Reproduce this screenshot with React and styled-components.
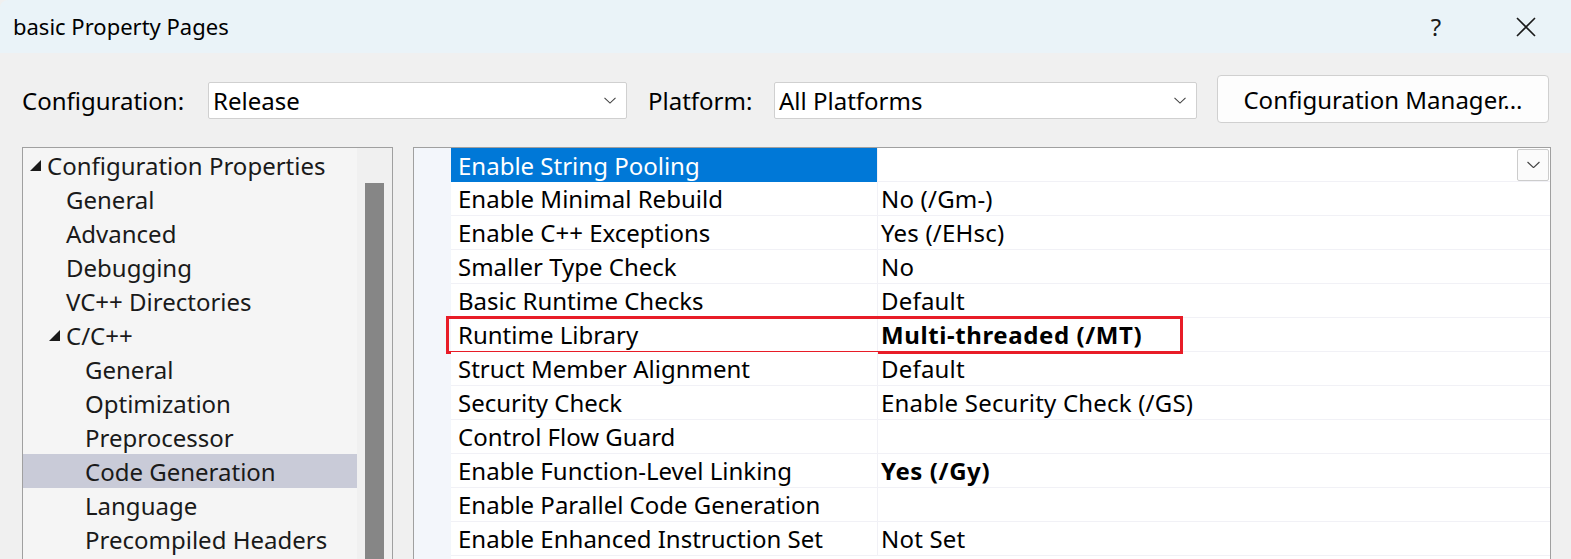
import React from "react";
import styled, { createGlobalStyle } from "styled-components";

const Global = createGlobalStyle`
  html, body { margin: 0; padding: 0; }
  body {
    background: #f0f0f0;
    font-family: "Segoe UI", "Noto Sans", "Open Sans", sans-serif;
    color: #000;
    overflow: hidden;
  }
`;

const Window = styled.div`
  width: 1571px;
  height: 559px;
  background: #f0f0f0;
  overflow: hidden;
  display: flex;
  flex-direction: column;
`;

const TitleBar = styled.div`
  height: 53px;
  flex: none;
  background: #eaf3f8;
  border-top-left-radius: 8px;
  display: flex;
  align-items: center;
  padding-left: 13px;
  box-sizing: border-box;
`;

const Title = styled.div`
  font-size: 22px;
  flex: 1;
  padding-bottom: 2px;
`;

const TitleButton = styled.div`
  width: 46px;
  height: 46px;
  display: flex;
  align-items: center;
  justify-content: center;
  font-size: 24px;
  color: #1a1a1a;
  margin-right: ${(p) => p.$mr || 0}px;
`;

const Body = styled.div`
  flex: 1;
  display: flex;
  flex-direction: column;
  padding: 22px 20px 0 22px;
  min-height: 0;
`;

const Toolbar = styled.div`
  display: flex;
  align-items: center;
  height: 48px;
  flex: none;
`;

const Label = styled.div`
  font-size: 24px;
  width: ${(p) => p.$w}px;
  flex: none;
  padding-top: 2px;
`;

const Select = styled.div`
  width: ${(p) => p.$w}px;
  height: 37px;
  box-sizing: border-box;
  flex: none;
  background: #fff;
  border: 1px solid #d0d0d0;
  border-radius: 2px;
  display: flex;
  align-items: center;
  padding: 0 10px 0 4px;
  font-size: 24px;
  margin-right: ${(p) => p.$mr || 0}px;
  margin-top: 3px;
`;

const SelectText = styled.span`
  flex: 1;
`;

const Button = styled.div`
  width: 332px;
  height: 48px;
  box-sizing: border-box;
  flex: none;
  background: #fdfdfd;
  border: 1px solid #d0d0d0;
  border-radius: 4px;
  display: flex;
  align-items: center;
  justify-content: center;
  font-size: 24px;
`;

const Panels = styled.div`
  display: flex;
  gap: 20px;
  margin-top: 24px;
  flex: 1;
  min-height: 0;
`;

const TreePanel = styled.div`
  width: 371px;
  flex: none;
  box-sizing: border-box;
  border: 1px solid #a0a0a0;
  border-bottom: none;
  background: #f5f5f5;
  display: flex;
`;

const TreeList = styled.div`
  flex: 1;
  display: flex;
  flex-direction: column;
`;

const TreeRow = styled.div`
  height: 34px;
  flex: none;
  display: flex;
  align-items: center;
  padding-left: ${(p) => 7 + p.$level * 19}px;
  background: ${(p) => (p.$selected ? "#c9cbd8" : "transparent")};
  font-size: 24px;
  color: #1a1a1a;
  white-space: nowrap;
`;

const Caret = styled.span`
  width: 17px;
  flex: none;
  display: flex;
  align-items: center;
`;

const ScrollTrack = styled.div`
  width: 35px;
  flex: none;
  background: #f0f0f0;
  padding: 35px 8px 0 8px;
  box-sizing: border-box;
`;

const ScrollThumb = styled.div`
  background: #868686;
  height: 100%;
`;

const PropPanel = styled.div`
  flex: 1;
  box-sizing: border-box;
  border: 1px solid #a0a0a0;
  border-bottom: none;
  background: #fff;
  display: flex;
`;

const Gutter = styled.div`
  width: 37px;
  flex: none;
  background: #f3f6fb;
`;

const Grid = styled.div`
  flex: 1;
  display: flex;
  flex-direction: column;
`;

const PropRow = styled.div`
  position: relative;
  height: 34px;
  flex: none;
  display: grid;
  grid-template-columns: 427px 1fr;
  box-sizing: border-box;
  border-bottom: 1px solid #f1f1f6;
`;

const NameCell = styled.div`
  display: flex;
  align-items: center;
  padding-left: 7px;
  font-size: 24px;
  background: ${(p) => (p.$selected ? "#0078d7" : "#fff")};
  color: ${(p) => (p.$selected ? "#fff" : "#000")};
  border-right: 1px solid #f1f1f6;
  white-space: nowrap;
  margin-bottom: ${(p) => (p.$selected ? "-1px" : "0")};
`;

const ValueCell = styled.div`
  display: flex;
  align-items: center;
  padding-left: 3px;
  padding-right: 1px;
  font-size: 24px;
  font-weight: ${(p) => (p.$bold ? 700 : 400)};
  letter-spacing: ${(p) => (p.$bold ? "0.6px" : "0.2px")};
  white-space: nowrap;
`;

const ValueText = styled.span`
  flex: 1;
`;

const DropButton = styled.div`
  width: 32px;
  height: 32px;
  box-sizing: border-box;
  border: 1px solid #cccccc;
  border-radius: 2px;
  background: #fbfbfb;
  display: flex;
  align-items: center;
  justify-content: center;
  align-self: center;
`;

const Highlight = styled.div`
  position: absolute;
  left: -5px;
  top: -2px;
  width: 737px;
  height: 38px;
  box-sizing: border-box;
  border: 3px solid #e81c27;
  pointer-events: none;
`;

const Chevron = ({ size = 12 }) => (
  <svg width={size} height={size * 0.6} viewBox="0 0 12 7">
    <path d="M0.5 0.8 L6 6 L11.5 0.8" fill="none" stroke="#444" strokeWidth="1.1" />
  </svg>
);

const Triangle = () => (
  <svg width="11" height="11" viewBox="0 0 11 11">
    <path d="M11 0 L11 11 L0 11 Z" fill="#1a1a1a" />
  </svg>
);

const tree = [
  { label: "Configuration Properties", level: 0, caret: true },
  { label: "General", level: 1 },
  { label: "Advanced", level: 1 },
  { label: "Debugging", level: 1 },
  { label: "VC++ Directories", level: 1 },
  { label: "C/C++", level: 1, caret: true },
  { label: "General", level: 2 },
  { label: "Optimization", level: 2 },
  { label: "Preprocessor", level: 2 },
  { label: "Code Generation", level: 2, selected: true },
  { label: "Language", level: 2 },
  { label: "Precompiled Headers", level: 2 },
];

const props = [
  { name: "Enable String Pooling", value: "", selected: true },
  { name: "Enable Minimal Rebuild", value: "No (/Gm-)" },
  { name: "Enable C++ Exceptions", value: "Yes (/EHsc)" },
  { name: "Smaller Type Check", value: "No" },
  { name: "Basic Runtime Checks", value: "Default" },
  { name: "Runtime Library", value: "Multi-threaded (/MT)", bold: true, marked: true },
  { name: "Struct Member Alignment", value: "Default" },
  { name: "Security Check", value: "Enable Security Check (/GS)" },
  { name: "Control Flow Guard", value: "" },
  { name: "Enable Function-Level Linking", value: "Yes (/Gy)", bold: true },
  { name: "Enable Parallel Code Generation", value: "" },
  { name: "Enable Enhanced Instruction Set", value: "Not Set" },
];

export default function App() {
  return (
    <Window>
      <Global />
      <TitleBar>
        <Title>basic Property Pages</Title>
        <TitleButton $mr={44}>?</TitleButton>
        <TitleButton $mr={22}>
          <svg width="20" height="20" viewBox="0 0 20 20">
            <path d="M1 1 L19 19 M19 1 L1 19" stroke="#1a1a1a" strokeWidth="1.6" />
          </svg>
        </TitleButton>
      </TitleBar>
      <Body>
        <Toolbar>
          <Label $w={186}>Configuration:</Label>
          <Select $w={419} $mr={21}>
            <SelectText>Release</SelectText>
            <Chevron />
          </Select>
          <Label $w={126}>Platform:</Label>
          <Select $w={423} $mr={20}>
            <SelectText>All Platforms</SelectText>
            <Chevron />
          </Select>
          <Button>Configuration Manager...</Button>
        </Toolbar>
        <Panels>
          <TreePanel>
            <TreeList>
              {tree.map((t, i) => (
                <TreeRow key={i} $level={t.level} $selected={t.selected}>
                  <Caret>{t.caret && <Triangle />}</Caret>
                  {t.label}
                </TreeRow>
              ))}
            </TreeList>
            <ScrollTrack>
              <ScrollThumb />
            </ScrollTrack>
          </TreePanel>
          <PropPanel>
            <Gutter />
            <Grid>
              {props.map((p, i) => (
                <PropRow key={i}>
                  <NameCell $selected={p.selected}>{p.name}</NameCell>
                  <ValueCell $bold={p.bold}>
                    <ValueText>{p.value}</ValueText>
                    {p.selected && (
                      <DropButton>
                        <Chevron size={13} />
                      </DropButton>
                    )}
                  </ValueCell>
                  {p.marked && <Highlight />}
                </PropRow>
              ))}
            </Grid>
          </PropPanel>
        </Panels>
      </Body>
    </Window>
  );
}
